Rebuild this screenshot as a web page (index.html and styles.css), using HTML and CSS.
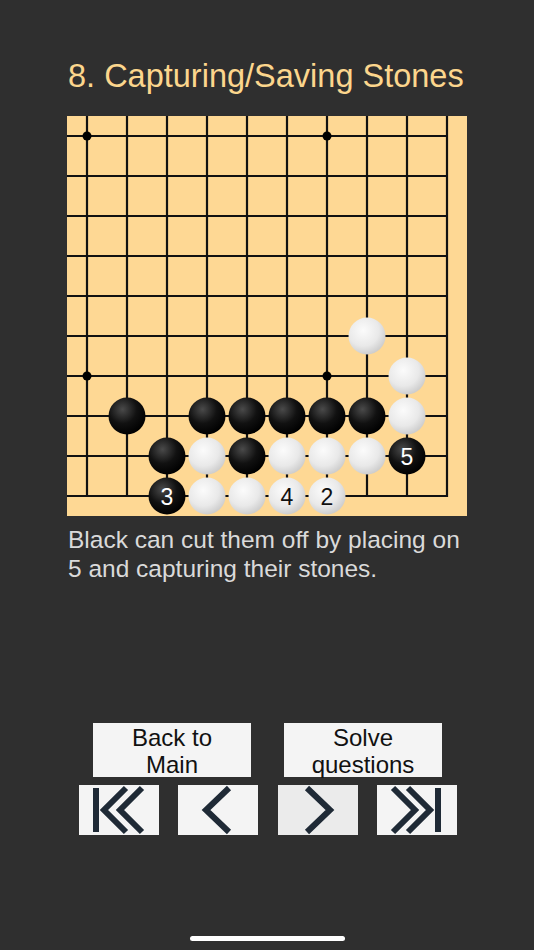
FILE: index.html
```html
<!DOCTYPE html>
<html>
<head>
<meta charset="utf-8">
<link rel="stylesheet" href="styles.css">
</head>
<body>
<div class="screen">
  <div class="content">
    <h1 class="title">8. Capturing/Saving Stones</h1>
    <div class="board">
      <svg width="400" height="400" viewBox="0 0 400 400" xmlns="http://www.w3.org/2000/svg">
        <defs>
          <radialGradient id="gb" cx="0.38" cy="0.32" r="0.7">
            <stop offset="0" stop-color="#4a4a4a"/>
            <stop offset="0.55" stop-color="#111"/>
            <stop offset="1" stop-color="#000"/>
          </radialGradient>
          <radialGradient id="gw" cx="0.4" cy="0.35" r="0.7">
            <stop offset="0" stop-color="#fbfbfb"/>
            <stop offset="0.6" stop-color="#e9e9e9"/>
            <stop offset="1" stop-color="#c9c9c9"/>
          </radialGradient>
        </defs>
        <rect x="0" y="0" width="400" height="400" fill="#fed894"/>
        <g stroke="#111" stroke-width="2.2">
          <line x1="20" y1="0" x2="20" y2="381"/>
          <line x1="60" y1="0" x2="60" y2="381"/>
          <line x1="100" y1="0" x2="100" y2="381"/>
          <line x1="140" y1="0" x2="140" y2="381"/>
          <line x1="180" y1="0" x2="180" y2="381"/>
          <line x1="220" y1="0" x2="220" y2="381"/>
          <line x1="260" y1="0" x2="260" y2="381"/>
          <line x1="300" y1="0" x2="300" y2="381"/>
          <line x1="340" y1="0" x2="340" y2="381"/>
          <line x1="380" y1="0" x2="380" y2="381"/>
          <line x1="0" y1="20" x2="381" y2="20"/>
          <line x1="0" y1="60" x2="381" y2="60"/>
          <line x1="0" y1="100" x2="381" y2="100"/>
          <line x1="0" y1="140" x2="381" y2="140"/>
          <line x1="0" y1="180" x2="381" y2="180"/>
          <line x1="0" y1="220" x2="381" y2="220"/>
          <line x1="0" y1="260" x2="381" y2="260"/>
          <line x1="0" y1="300" x2="381" y2="300"/>
          <line x1="0" y1="340" x2="381" y2="340"/>
          <line x1="0" y1="380" x2="381" y2="380"/>
        </g>
        <g fill="#000">
          <circle cx="20" cy="20" r="4.5"/>
          <circle cx="260" cy="20" r="4.5"/>
          <circle cx="20" cy="260" r="4.5"/>
          <circle cx="260" cy="260" r="4.5"/>
        </g>
        <g fill="url(#gw)">
          <circle cx="300" cy="220" r="18.5"/>
          <circle cx="340" cy="260" r="18.5"/>
          <circle cx="340" cy="300" r="18.5"/>
          <circle cx="140" cy="340" r="18.5"/>
          <circle cx="220" cy="340" r="18.5"/>
          <circle cx="260" cy="340" r="18.5"/>
          <circle cx="300" cy="340" r="18.5"/>
          <circle cx="140" cy="380" r="18.5"/>
          <circle cx="180" cy="380" r="18.5"/>
          <circle cx="220" cy="380" r="18.5"/>
          <circle cx="260" cy="380" r="18.5"/>
        </g>
        <g fill="url(#gb)">
          <circle cx="60" cy="300" r="18.5"/>
          <circle cx="140" cy="300" r="18.5"/>
          <circle cx="180" cy="300" r="18.5"/>
          <circle cx="220" cy="300" r="18.5"/>
          <circle cx="260" cy="300" r="18.5"/>
          <circle cx="300" cy="300" r="18.5"/>
          <circle cx="100" cy="340" r="18.5"/>
          <circle cx="180" cy="340" r="18.5"/>
          <circle cx="340" cy="340" r="18.5"/>
          <circle cx="100" cy="380" r="18.5"/>
        </g>
        <g class="lbl" text-anchor="middle">
          <text x="100" y="388.5" fill="#fff">3</text>
          <text x="340" y="348.5" fill="#fff">5</text>
          <text x="220" y="388.5" fill="#111">4</text>
          <text x="260" y="388.5" fill="#111">2</text>
        </g>
      </svg>
    </div>
    <p class="desc">Black can cut them off by placing on 5 and capturing their stones.</p>
  </div>
  <div class="actions">
    <div class="btn">Back to<br>Main</div>
    <div class="btn">Solve<br>questions</div>
  </div>
  <div class="nav">
    <div class="navbtn">
      <svg width="80" height="50" viewBox="0 0 80 50"><g fill="none" stroke="#1f2a36" stroke-width="6" stroke-linejoin="miter"><line x1="17" y1="3" x2="17" y2="47"/><polyline points="47,3 25,25 47,47"/><polyline points="63,3 41,25 63,47"/></g></svg>
    </div>
    <div class="navbtn">
      <svg width="80" height="50" viewBox="0 0 80 50"><g fill="none" stroke="#1f2a36" stroke-width="6"><polyline points="51,3 28,25 51,47"/></g></svg>
    </div>
    <div class="navbtn active">
      <svg width="80" height="50" viewBox="0 0 80 50"><g fill="none" stroke="#1f2a36" stroke-width="6"><polyline points="29,3 52,25 29,47"/></g></svg>
    </div>
    <div class="navbtn">
      <svg width="80" height="50" viewBox="0 0 80 50"><g fill="none" stroke="#1f2a36" stroke-width="6"><line x1="61" y1="3" x2="61" y2="47"/><polyline points="16,3 38,25 16,47"/><polyline points="31,3 53,25 31,47"/></g></svg>
    </div>
  </div>
  <div class="home"></div>
</div>
</body>
</html>
```
FILE: styles.css
```css
html, body {
  margin: 0;
  padding: 0;
  background: #2f2f2f;
}
.screen {
  width: 534px;
  height: 950px;
  display: flex;
  flex-direction: column;
  font-family: "Liberation Sans", Arial, sans-serif;
}
.content {
  padding-left: 67px;
}
.title {
  margin: 0;
  padding-top: 58px;
  padding-left: 1px;
  font-size: 32.5px;
  line-height: 36px;
  font-weight: normal;
  color: #fcd68d;
  white-space: nowrap;
}
.board {
  margin-top: 22px;
  width: 400px;
  height: 400px;
}
.board svg {
  display: block;
}
.lbl {
  font-family: "Liberation Sans", Arial, sans-serif;
  font-size: 23px;
}
.desc {
  margin: 9px 0 0 1px;
  width: 405px;
  font-size: 24.5px;
  line-height: 29px;
  color: #dadada;
}
.actions {
  margin-top: 140px;
  display: flex;
  justify-content: center;
  gap: 33px;
  padding-left: 1px;
}
.btn {
  width: 158px;
  height: 54px;
  box-sizing: border-box;
  padding-top: 1px;
  background: #f4f4f4;
  color: #111;
  text-align: center;
  font-size: 24px;
  line-height: 27px;
}
.nav {
  margin-top: 8px;
  display: flex;
  justify-content: center;
  gap: 19.5px;
  padding-left: 2px;
}
.navbtn {
  width: 80px;
  height: 50px;
  background: #f4f4f4;
}
.navbtn svg {
  display: block;
}
.navbtn.active {
  background: #ebebeb;
}
.home {
  margin: auto auto 9px;
  width: 155px;
  height: 5px;
  border-radius: 3px;
  background: #fff;
}
```
